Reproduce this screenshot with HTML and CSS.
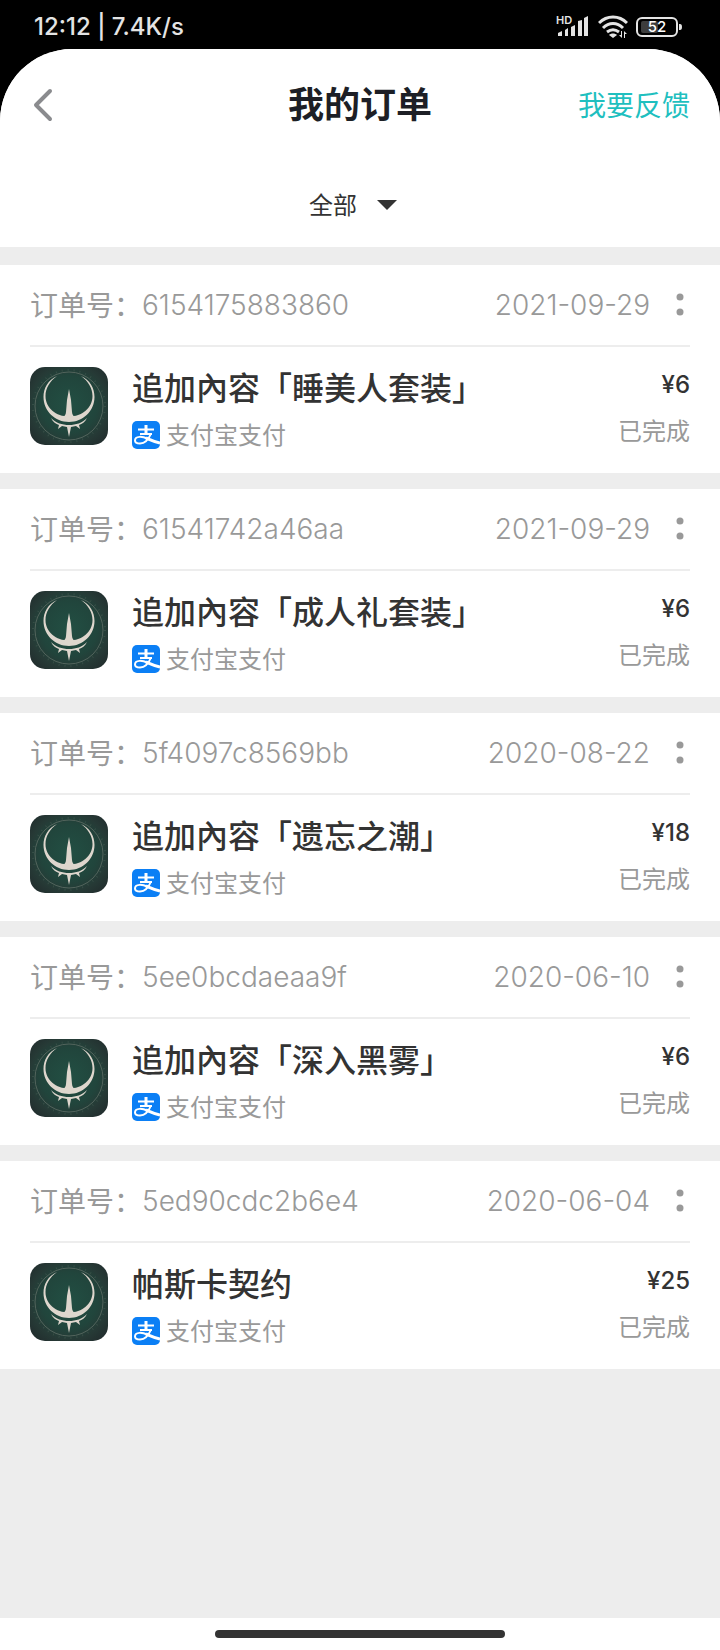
FILE: index.html
```html
<!DOCTYPE html>
<html lang="zh-CN">
<head>
    <meta charset="UTF-8">
    <meta name="viewport" content="width=device-width, initial-scale=1.0">
    <title>我的订单</title>
    <link rel="stylesheet" href="styles.css">
</head>
<body>
    <!-- shared icons -->
    <svg class="sprite" aria-hidden="true">
        <defs>
            <radialGradient id="coverBg" cx="50%" cy="48%" r="72%">
                <stop offset="0" stop-color="#224f43"/>
                <stop offset="0.5" stop-color="#21453c"/>
                <stop offset="0.7" stop-color="#263a36"/>
                <stop offset="1" stop-color="#20282a"/>
            </radialGradient>
        </defs>
        <symbol id="cover" viewBox="0 0 78 78">
            <rect width="78" height="78" rx="15" fill="url(#coverBg)"/>
            <circle cx="39" cy="39" r="34" fill="none" stroke="#52645c" stroke-width="1"/>
            <circle cx="39" cy="39" r="36" fill="none" stroke="#4a5f56" stroke-width="2" stroke-dasharray="1 5" opacity="0.5"/>
            <g fill="#ded6cd">
                <path d="M27 9C18 13 13.500 21 13.500 30C13.500 44 25 55 39 55S64.500 44 64.500 30C64.500 21 60 13 51 9C58 14 62.500 21 62.500 29C62.500 41 52 49.500 39 49.500S15.500 41 15.500 29C15.500 21 20 14 27 9z"/>
                <path d="M39 22l2 11 1 12c0 3 2 5 5 6-2 2-5 3-8 3s-6-1-8-3c3-1 5-3 5-6l1-12z"/>
                <path d="M21 51c5 5 11 7 18 7s13-2 18-7c-2 4-5 6-8 7l1 4-4-3-5 1-2 10-2-10-5-1-4 3 1-4c-3-1-6-3-8-7z"/>
            </g>
        </symbol>
        <symbol id="alipay" viewBox="0 0 28 28">
            <rect width="28" height="28" rx="5" fill="#0b7ff5"/>
            <g fill="none" stroke="#fff" stroke-linecap="butt">
                <path stroke-width="2" d="M6 8.500h16M8 13h12"/>
                <path stroke-width="3" d="M14 4v9"/>
                <path stroke-width="2" d="M19 12.500c-2 5-6 10-11 10-3 0-5-1-5-3 0-5 8-4 12-2"/>
                <path stroke-width="3" d="M14 17c5 2 8 4 14 5"/>
            </g>
        </symbol>
    </svg>

    <div class="status-bar">
        <span class="clock">12:12 | 7.4K/s</span>
        <div class="indicators">
            <svg class="signal" width="34" height="24" viewBox="0 0 34 24" role="img" aria-label="HD 信号">
                <text class="hd" x="0" y="9">HD</text>
                <path fill="#e4e4e4" d="M2 21v-3l4-2v5zM9 21v-6l3-2v8zM15 21v-9l4-2v11zM22 21V6l4-1v16zM28 21V3l4-2v20z"/>
            </svg>
            <svg width="30" height="24" viewBox="0 0 30 24" role="img" aria-label="Wi-Fi">
                <g fill="none" stroke="#e4e4e4" stroke-width="3">
                    <path d="M1 8c8-8 20-8 28 0M5 13c6-6 14-6 20 0M9 17c4-3 8-3 12 0"/>
                </g>
                <path fill="#e4e4e4" d="M11 20c2-2 6-2 8 0l-4 3zM24 16v7l-3-3h2v-4zM26 23v-7l3 3h-2v4z"/>
            </svg>
            <svg width="46" height="22" viewBox="0 0 46 22" role="img" aria-label="电量 52%">
                <rect x="1" y="2" width="40" height="18" rx="5" fill="none" stroke="#e4e4e4" stroke-width="2"/>
                <rect x="5" y="5" width="17" height="12" rx="2" fill="#3d3d3d"/>
                <path fill="#e4e4e4" d="M43 8h1q2 0 2 3t-2 3h-1z"/>
                <text class="battery-level" x="21" y="16" text-anchor="middle">52</text>
            </svg>
        </div>
    </div>

    <div class="page">
        <header class="top">
            <div class="nav">
                <button type="button" class="back" aria-label="返回">
                    <svg width="20" height="34" viewBox="0 0 20 34">
                        <path d="M17 3L3 17l14 14" fill="none" stroke="#8a8b8e" stroke-width="4" stroke-linecap="round" stroke-linejoin="round"/>
                    </svg>
                </button>
                <h1>我的订单</h1>
                <a href="#" class="feedback">我要反馈</a>
            </div>
            <div class="filter">
                <select id="status" aria-label="订单状态">
                    <option>全部</option>
                </select>
                <svg width="20" height="10" viewBox="0 0 20 10"><path d="M0 0h20L10 10z" fill="#333"/></svg>
            </div>
        </header>

        <main class="orders" id="orders"></main>
    </div>

    <div class="home-bar"><span></span></div>

    <script>
        const orders = [
            { no: "6154175883860", date: "2021-09-29", title: "追加內容「睡美人套装」", price: 6 },
            { no: "61541742a46aa", date: "2021-09-29", title: "追加內容「成人礼套装」", price: 6 },
            { no: "5f4097c8569bb", date: "2020-08-22", title: "追加內容「遗忘之潮」", price: 18 },
            { no: "5ee0bcdaeaa9f", date: "2020-06-10", title: "追加內容「深入黑雾」", price: 6 },
            { no: "5ed90cdc2b6e4", date: "2020-06-04", title: "帕斯卡契约", price: 25 }
        ];
        document.getElementById('orders').innerHTML = orders.map(o => `
            <article class="order">
                <div class="order-head">
                    <span>订单号：</span>
                    <span class="number">${o.no}</span>
                    <time class="number" datetime="${o.date}">${o.date}</time>
                    <button type="button" class="more" aria-label="更多">
                        <svg width="8" height="24" viewBox="0 0 8 24" fill="#999"><circle cx="4" cy="4" r="3.500"/><circle cx="4" cy="19" r="3.500"/></svg>
                    </button>
                </div>
                <div class="order-body">
                    <svg class="cover"><use href="#cover"/></svg>
                    <div class="info">
                        <h2>${o.title}</h2>
                        <p class="pay"><svg><use href="#alipay"/></svg>支付宝支付</p>
                    </div>
                    <div class="amount">
                        <strong>¥${o.price}</strong>
                        <span>已完成</span>
                    </div>
                </div>
            </article>`).join('');
    </script>
</body>
</html>
```
FILE: styles.css
```css
* { margin: 0; padding: 0; box-sizing: border-box; }
body {
    font-family: "Noto Sans", "Noto Sans CJK SC", sans-serif;
    background-color: #000;
    color: #333;
    display: flex;
    flex-direction: column;
    min-height: 100vh;
}
button { border: none; background: none; cursor: pointer; }
svg { display: block; flex: none; }
.sprite { position: absolute; width: 0; height: 0; }

/* Status bar */
.status-bar {
    display: flex;
    justify-content: space-between;
    align-items: center;
    height: 49px;
    padding: 4px 38px 0 34px;
    color: #e4e4e4;
}
.clock { font: 500 24px/32px Inter, sans-serif; }
.indicators { display: flex; align-items: center; gap: 8px; }
.signal { overflow: visible; }
.hd { font: 600 11px Inter, sans-serif; fill: #e4e4e4; }
.battery-level { font: 500 15px Inter, sans-serif; fill: #fff; }

/* Header */
.page {
    flex: 1;
    background-color: #ededed;
    border-radius: 72px 72px 0 0;
    overflow: hidden;
}
.top { background-color: #fff; margin-bottom: 18px; }
.nav {
    display: grid;
    grid-template-columns: 1fr auto 1fr;
    align-items: center;
    height: 112px;
    padding: 0 30px;
}
.back { justify-self: start; padding: 0 3px; }
h1 { font-size: 36px; line-height: 48px; font-weight: 700; color: #1d1f26; }
.feedback {
    justify-self: end;
    font-size: 28px;
    line-height: 40px;
    color: #1fbfbf;
    text-decoration: none;
}
.filter {
    display: flex;
    justify-content: center;
    align-items: center;
    height: 86px;
    padding: 2px 14px 0 0;
}
.filter select {
    appearance: none;
    border: none;
    background: none;
    font: inherit;
    font-size: 24px;
    line-height: 32px;
    color: #333;
    padding-right: 40px;
    margin-right: -20px;
}
.filter svg { pointer-events: none; }

/* Orders */
.orders { display: flex; flex-direction: column; gap: 16px; }
.order { background-color: #fff; padding: 0 30px; }
.order-head {
    display: flex;
    align-items: center;
    height: 82px;
    border-bottom: 2px solid #ededed;
    font-size: 28px;
    line-height: 40px;
    color: #999;
}
.number { font-family: Inter, sans-serif; font-weight: 300; }
.order-head time { margin-left: auto; }
.more { padding: 0 6px; margin-left: 20px; }
.order-body { display: flex; height: 126px; padding-top: 20px; }
.cover { width: 78px; height: 78px; }
.info { flex: 1; margin-left: 24px; }
h2 { font-size: 32px; line-height: 42px; font-weight: 500; color: #333; }
.pay {
    display: flex;
    align-items: center;
    gap: 6px;
    margin-top: 10px;
    font-size: 24px;
    line-height: 32px;
    color: #999;
}
.pay svg { width: 28px; height: 28px; }
.amount {
    display: flex;
    flex-direction: column;
    align-items: flex-end;
    gap: 14px;
    padding-top: 2px;
    font-size: 24px;
    line-height: 32px;
    color: #999;
}
.amount strong { font-family: Inter, sans-serif; font-weight: 500; color: #333; }

/* Home indicator */
.home-bar {
    display: flex;
    justify-content: center;
    align-items: center;
    height: 32px;
    background-color: #fff;
}
.home-bar span { width: 290px; height: 8px; border-radius: 4px; background-color: #333; }
```
